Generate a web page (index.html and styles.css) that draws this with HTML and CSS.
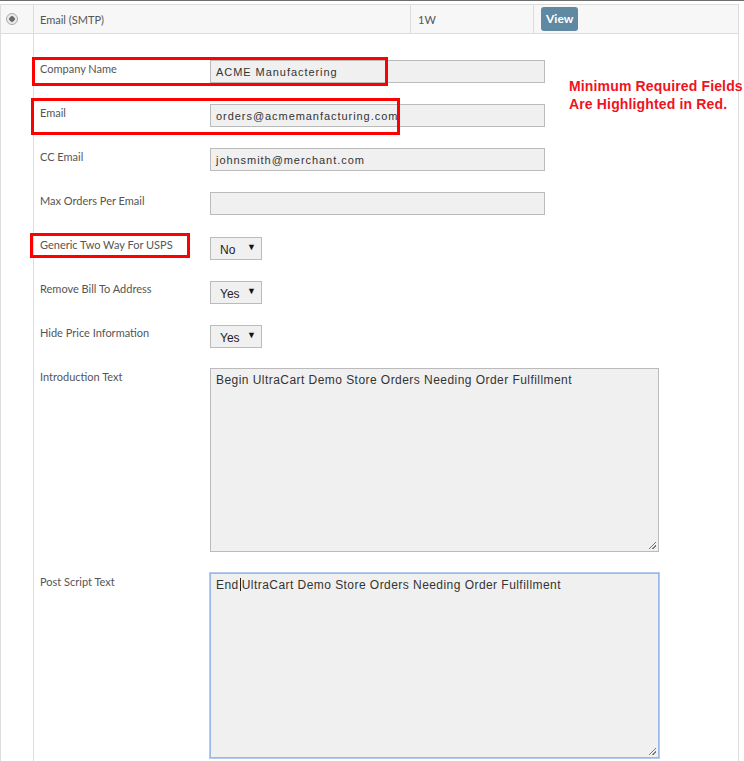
FILE: index.html
```html
<!DOCTYPE html>
<html lang="en">
<head>
    <meta charset="UTF-8">
    <title>Email (SMTP) Fulfillment</title>
    <link rel="stylesheet" href="styles.css">
</head>
<body>
<div class="top-rule"></div>
<div class="panel">
    <div class="head-row">
        <div class="cell cell-radio"><span class="radio"></span></div>
        <div class="cell cell-name">Email (SMTP)</div>
        <div class="cell cell-freq">1W</div>
        <div class="cell cell-action"><span class="btn-view">View</span></div>
    </div>
    <div class="body-row">
        <div class="gutter"></div>
        <div class="form">
            <div class="field">
                <label class="label">Company Name</label>
                <div class="input">ACME Manufactering</div>
            </div>
            <div class="field">
                <label class="label">Email</label>
                <div class="input">orders@acmemanfacturing.com</div>
            </div>
            <div class="field">
                <label class="label">CC Email</label>
                <div class="input">johnsmith@merchant.com</div>
            </div>
            <div class="field">
                <label class="label">Max Orders Per Email</label>
                <div class="input"></div>
            </div>
            <div class="field">
                <label class="label">Generic Two Way For USPS</label>
                <div class="select"><span>No</span><span class="arrow">&#9660;</span></div>
            </div>
            <div class="field">
                <label class="label">Remove Bill To Address</label>
                <div class="select"><span>Yes</span><span class="arrow">&#9660;</span></div>
            </div>
            <div class="field">
                <label class="label">Hide Price Information</label>
                <div class="select"><span>Yes</span><span class="arrow">&#9660;</span></div>
            </div>
            <div class="field">
                <label class="label">Introduction Text</label>
                <div class="textarea">Begin UltraCart Demo Store Orders Needing Order Fulfillment<span class="grip"></span></div>
            </div>
            <div class="field">
                <label class="label">Post Script Text</label>
                <div class="textarea focused">End<span class="caret"></span>UltraCart Demo Store Orders Needing Order Fulfillment<span class="grip"></span></div>
            </div>
        </div>
    </div>
</div>

<!-- annotations drawn over the screenshot -->
<div class="mark mark-company"></div>
<div class="mark mark-email"></div>
<div class="mark mark-usps"></div>
<div class="note">Minimum Required Fields<br>Are Highlighted in Red.</div>
</body>
</html>
```

FILE: styles.css
```css
body{
    margin: 0;
    font-family: Lato, "Open Sans", sans-serif;
    color: #555;
    background: #fff;
}
.top-rule{
    height: 1px;
    background: #6e6e6e;
    margin-bottom: 3px;
}
.panel{
    width: 737px;
    border-left: 1px solid #ddd;
    border-right: 1px solid #ddd;
}
.head-row{
    display: grid;
    grid-template-columns: 32px 377px 123px 1fr;
    height: 28px;
    background: #f7f7f7;
    border-top: 1px solid #ddd;
    border-bottom: 1px solid #ddd;
    font-size: 11px;
}
.cell{
    display: flex;
    align-items: center;
    padding-left: 6px;
}
.cell + .cell{
    border-left: 1px solid #ddd;
}
.cell-radio{
    padding-left: 5px;
}
.radio{
    width: 10px;
    height: 10px;
    border-radius: 50%;
    border: 1px solid #a9a9a9;
    background: radial-gradient(circle, #6a6a6a 0 2.5px, #e6e6e6 3px, #f4f4f4 100%);
}
.cell-freq{
    padding-left: 7px;
}
.btn-view{
    background: #5f88a2;
    color: #fff;
    font-weight: bold;
    font-size: 12px;
    padding: 4px 5px 5px;
    margin-left: 1px;
    border-radius: 3px;
}
.body-row{
    display: flex;
}
.gutter{
    width: 32px;
    border-right: 1px solid #ddd;
}
.form{
    padding: 26px 0 0 6px;
}
.field{
    display: flex;
    margin-bottom: 21px;
}
.label{
    width: 170px;
    font-size: 11px;
    padding-top: 2px;
    color: #555;
}
.input{
    width: 323px;
    height: 21px;
    background: #f0f0f0;
    border: 1px solid #bbb;
    padding: 0 5px;
    font-family: "Liberation Sans", Arial, sans-serif;
    font-size: 11px;
    letter-spacing: 0.95px;
    color: #333;
    line-height: 23px;
}
.select{
    width: 36px;
    height: 21px;
    margin-top: 1px;
    margin-bottom: -1px;
    background: #f0f0f0;
    border: 1px solid #bbb;
    padding: 0 5px 0 9px;
    display: flex;
    justify-content: space-between;
    align-items: center;
    font-family: "Liberation Sans", Arial, sans-serif;
    font-size: 12px;
    color: #222;
}
.select span:first-child{
    padding-top: 3px;
}
.arrow{
    font-size: 9px;
    color: #111;
    margin-top: -3px;
}
.textarea{
    position: relative;
    width: 437px;
    height: 174px;
    background: #f0f0f0;
    border: 1px solid #bbb;
    padding: 4px 5px;
    font-family: "Liberation Sans", Arial, sans-serif;
    font-size: 12px;
    letter-spacing: 0.45px;
    color: #333;
    line-height: 14px;
}
.textarea.focused{
    height: 175px;
    border-color: #9ab8e8;
    box-shadow: 0 0 0 1px #b3cbf0;
}
.caret{
    display: inline-block;
    width: 1px;
    height: 13px;
    background: #222;
    vertical-align: -2px;
    margin: 0 1px;
}
.grip{
    position: absolute;
    right: 2px;
    bottom: 2px;
    width: 7px;
    height: 7px;
    background: linear-gradient(135deg, transparent 0 45%, #777 45% 55%, transparent 55% 70%, #777 70% 80%, transparent 80%);
}
.mark{
    position: absolute;
    border: 3px solid #f00;
}
.mark-company{
    left: 32px;
    top: 57px;
    width: 350px;
    height: 23px;
}
.mark-email{
    left: 31px;
    top: 98px;
    width: 363px;
    height: 31px;
}
.mark-usps{
    left: 30px;
    top: 233px;
    width: 154px;
    height: 19px;
}
.note{
    position: absolute;
    left: 569px;
    top: 77px;
    font-family: "Liberation Sans", Arial, sans-serif;
    font-weight: bold;
    font-size: 14px;
    letter-spacing: 0.15px;
    line-height: 18px;
    color: #f0131e;
    white-space: nowrap;
}
```
